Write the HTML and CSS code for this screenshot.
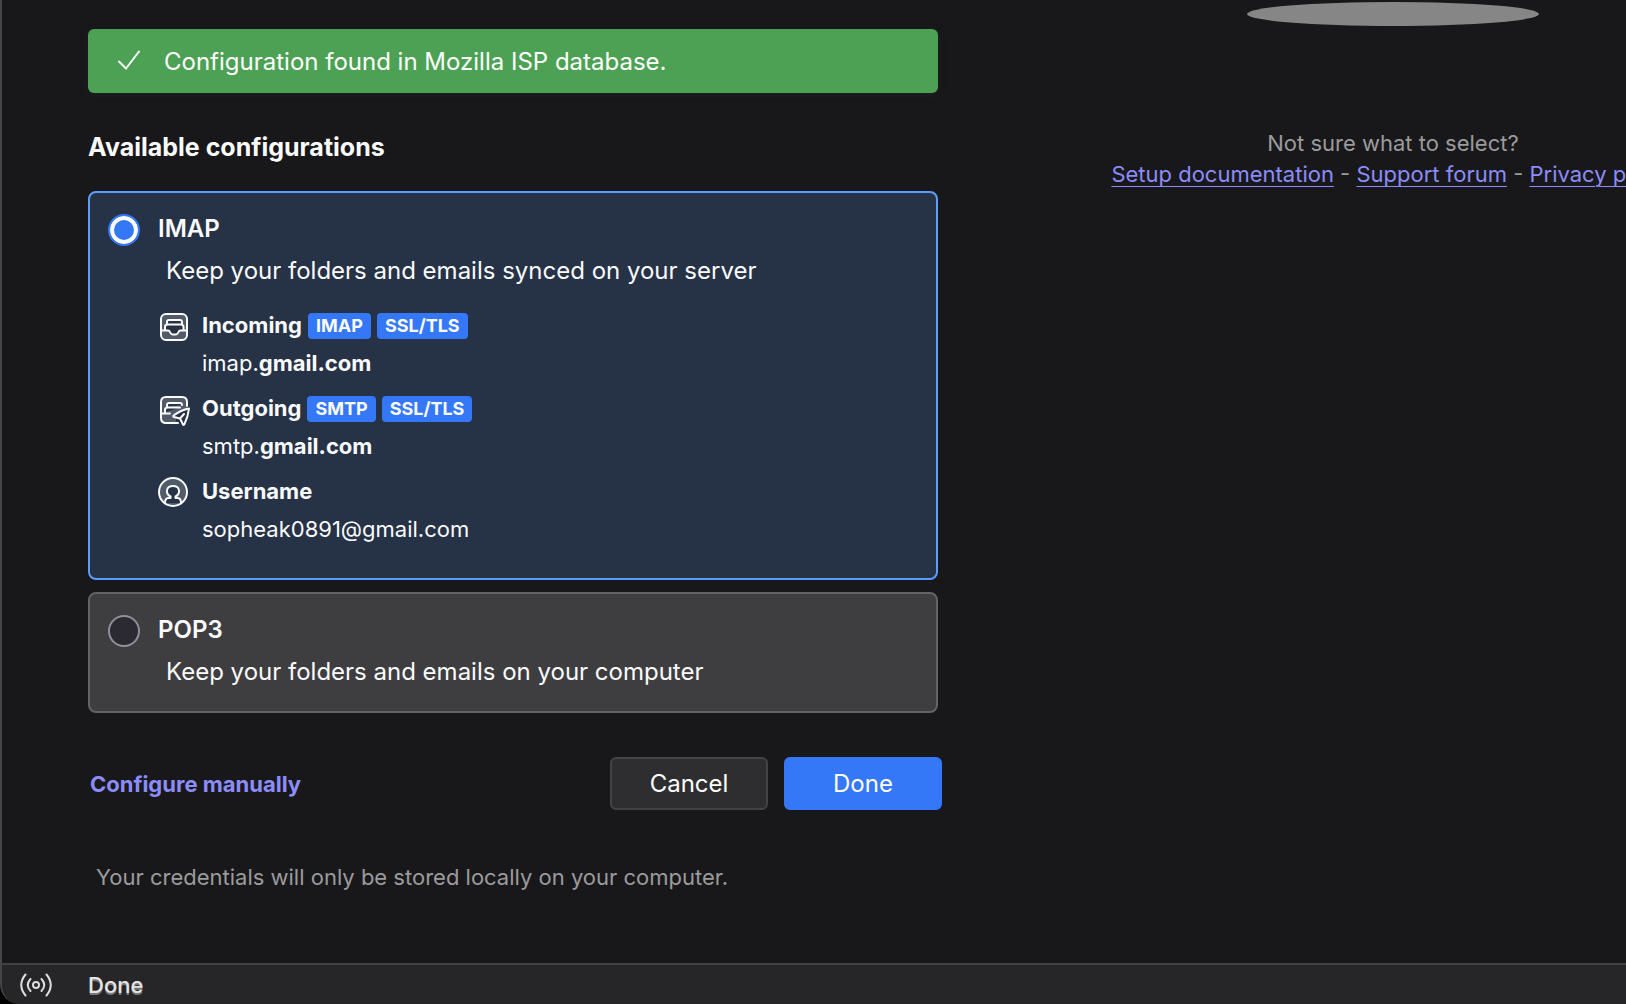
FILE: index.html
```html
<!DOCTYPE html>
<html lang="en">
<head>
<meta charset="utf-8">
<title>Account Setup</title>
<link rel="stylesheet" href="styles.css">
</head>
<body>
<div class="window">
  <div class="content">
    <main class="setup">
      <div class="notice" role="status">
        <svg class="notice-icon" viewBox="0 0 24 24" aria-hidden="true"><path d="M2 11.500l7 7L22 1.500"/></svg>
        <span>Configuration found in Mozilla ISP database.</span>
      </div>

      <form class="form">
        <h2 class="heading">Available configurations</h2>

        <section class="option option-selected">
          <input class="radio" type="radio" name="config" id="imap" checked>
          <div class="option-body">
            <label class="option-title" for="imap">IMAP</label>
            <p class="option-text">Keep your folders and emails synced on your server</p>
            <ul class="details">
              <li class="detail">
                <svg class="icon" viewBox="0 0 32 32" aria-hidden="true">
                  <rect class="tint" x="3" y="3" width="26" height="26" rx="5"/>
                  <path class="hollow" d="M9 13V11Q9 9 11 9H22Q24 9 24 11V13M3 19.500H7V16Q7 13.500 9.500 13.500H23Q25.500 13.500 25.500 16V19.500H29M7 19.500H10Q11.500 19.500 12 21Q13 23.500 15 23.500H17.500Q19.500 23.500 20.500 21Q21 19.500 22.500 19.500H25.500"/>
                </svg>
                <div class="detail-head"><strong>Incoming</strong><span class="tag">IMAP</span><span class="tag">SSL/TLS</span></div>
                <div class="detail-value">imap.<strong>gmail.com</strong></div>
              </li>
              <li class="detail">
                <svg class="icon" viewBox="0 0 32 32" aria-hidden="true">
                  <path class="tint-fill" d="M3 8Q3 3 8 3H24Q29 3 29 8V15L14 21L18 25V29H8Q3 29 3 24Z"/>
                  <path class="hollow" d="M9 13V11Q9 9 11 9H22Q24 9 24 11M3 19.500H7V16Q7 13.500 9.500 13.500H22M7 19.500H12"/>
                  <path class="line" d="M29 12V8Q29 3 24 3H8Q3 3 3 8V24Q3 29 8 29H20"/>
                  <path class="plane" d="M31 14.500Q23 16 15.500 21.500Q15 22.500 16 23L22 24.500L25 30.500Q26 31.500 26.500 30Q30 23 31 14.500ZM22 24.500L26 20"/>
                </svg>
                <div class="detail-head"><strong>Outgoing</strong><span class="tag">SMTP</span><span class="tag">SSL/TLS</span></div>
                <div class="detail-value">smtp.<strong>gmail.com</strong></div>
              </li>
              <li class="detail">
                <svg class="icon" viewBox="0 0 32 32" aria-hidden="true">
                  <circle class="tint" cx="15" cy="15" r="14"/>
                  <path class="hollow" d="M7 26Q7 21 10.500 21H12.500V19.500C7 16.500 8 9 15 9C22 9 23 16.500 17.500 19.500V21H19.500Q23 21 23 26"/>
                </svg>
                <div class="detail-head"><strong>Username</strong></div>
                <div class="detail-value">sopheak0891@gmail.com</div>
              </li>
            </ul>
          </div>
        </section>

        <section class="option">
          <input class="radio" type="radio" name="config" id="pop3">
          <div class="option-body">
            <label class="option-title" for="pop3">POP3</label>
            <p class="option-text">Keep your folders and emails on your computer</p>
          </div>
        </section>

        <div class="actions">
          <a class="manual" href="#manual">Configure manually</a>
          <button class="button" type="button">Cancel</button>
          <button class="button button-primary" type="button">Done</button>
        </div>
      </form>

      <p class="footnote">Your credentials will only be stored locally on your computer.</p>
    </main>

    <aside class="help">
      <svg class="shadow" viewBox="0 0 292 26" aria-hidden="true"><ellipse cx="146" cy="14" rx="146" ry="12"/></svg>
      <p class="help-text">Not sure what to select?</p>
      <p class="help-text"><a href="#docs">Setup documentation</a> - <a href="#forum">Support forum</a> - <a href="#privacy">Privacy policy</a></p>
    </aside>
  </div>

  <footer class="statusbar">
    <svg class="signal" viewBox="0 0 32 24" aria-hidden="true">
      <circle cx="16" cy="12" r="3"/>
      <path d="M10.500 6Q5 12 10.500 18M21.500 6Q27 12 21.500 18M5.500 1.500Q-3 12 5.500 22.500M26.500 1.500Q35 12 26.500 22.500"/>
    </svg>
    <span>Done</span>
  </footer>
</div>
</body>
</html>
```
FILE: styles.css
```css
* {
  box-sizing: border-box;
}

body {
  margin: 0;
  background: #000;
  color: #fbfbfe;
  font: 24px/32px Inter, "Liberation Sans", sans-serif;
}

h2,
p,
ul {
  margin: 0;
  padding: 0;
  list-style: none;
}

.window {
  display: flex;
  flex-direction: column;
  min-height: 100vh;
  overflow: hidden;
  border-left: 2px solid #454547;
  border-bottom-left-radius: 20px;
  background: #18181a;
}

.content {
  flex: 1;
  display: grid;
  grid-template-columns: minmax(0, 854px) minmax(0, 1fr);
  column-gap: 218px;
  padding-left: 86px;
}

.setup {
  padding-top: 29px;
}

.notice {
  display: flex;
  align-items: center;
  gap: 23px;
  height: 64px;
  margin-right: 4px;
  padding: 2px 0 0 29px;
  border-radius: 6px;
  background: #4ca154;
  color: #fff;
  box-shadow: 0 2px 6px #202024;
}

.notice-icon {
  width: 24px;
  height: 24px;
  fill: none;
  stroke: #fff;
  stroke-width: 2;
  stroke-linecap: round;
  stroke-linejoin: round;
}

.heading {
  margin: 38px 0 28px;
  font-size: 25px;
  font-weight: 700;
}

.option {
  display: flex;
  gap: 18px;
  margin: 0 4px 12px 0;
  padding: 20px 18px 23px;
  border: 2px solid #636365;
  border-radius: 8px;
  background: #3e3e40;
}

.option-selected {
  padding-bottom: 30px;
  border-color: #5a9cff;
  background: #263245;
}

.radio {
  appearance: none;
  flex: none;
  width: 32px;
  height: 32px;
  margin: 1px 0 0;
  border: 2px solid #8f8f9d;
  border-radius: 50%;
  background: #2b2a33;
}

.radio:checked {
  border-color: #3478f8;
  background: #3478f8;
  box-shadow: inset 0 0 0 4px #fff;
}

.option-title {
  display: block;
  height: 32px;
  line-height: 32px;
  font-weight: 600;
}

.option-text {
  padding: 10px 0 0 8px;
}

.details {
  display: grid;
  row-gap: 7px;
  margin-top: 19px;
  font-size: 22px;
  line-height: 38px;
}

.detail {
  display: grid;
  grid-template-columns: 32px 1fr;
  column-gap: 12px;
}

.detail-head {
  display: flex;
  align-items: center;
  gap: 6px;
}

.detail-value {
  grid-column: 2;
}

.tag {
  margin-top: 2px;
  padding: 0 8px;
  border-radius: 4px;
  background: #3478f8;
  font-size: 18px;
  font-weight: 700;
  line-height: 26px;
}

.icon {
  width: 32px;
  height: 32px;
  margin-top: 5px;
  fill: none;
  stroke: #fbfbfe;
  stroke-width: 2;
  stroke-linecap: round;
  stroke-linejoin: round;
}

.tint {
  fill: #515b6a;
}

.tint-fill {
  fill: #515b6a;
  stroke: none;
}

.hollow,
.plane {
  fill: #263245;
}

.actions {
  display: flex;
  align-items: center;
  gap: 16px;
  margin-top: 44px;
  padding-left: 2px;
}

.manual {
  margin-right: auto;
  color: #8c8cfa;
  font-size: 22px;
  font-weight: 700;
  text-decoration: none;
}

.button {
  width: 158px;
  height: 53px;
  padding: 0;
  border: 2px solid #434345;
  border-radius: 6px;
  background: #2e2e30;
  color: #fff;
  font: inherit;
}

.button-primary {
  border-color: #3478f8;
  background: #3478f8;
}

.footnote {
  margin: 51px 0 40px;
  padding-left: 8px;
  color: #9b9b9c;
  font-size: 22px;
}

.help {
  display: flex;
  flex-direction: column;
  align-items: center;
  color: #9b9b9c;
  font-size: 22px;
  line-height: 31px;
  white-space: nowrap;
}

.shadow {
  flex: none;
  width: 292px;
  height: 26px;
  margin-bottom: 102px;
  fill: #868686;
}

.help a {
  color: #8c8cfa;
  text-underline-offset: 4px;
  text-decoration-thickness: 1px;
}

.statusbar {
  display: flex;
  align-items: center;
  gap: 36px;
  height: 41px;
  padding-left: 18px;
  border-top: 2px solid #414143;
  background: #262628;
  color: #e4e4e4;
  font-size: 22px;
  font-weight: 500;
  text-shadow: 0 2px 0 #77777a;
}

.signal {
  width: 32px;
  height: 24px;
  fill: none;
  stroke: #dcdcdc;
  stroke-width: 2;
  stroke-linecap: round;
}
```
